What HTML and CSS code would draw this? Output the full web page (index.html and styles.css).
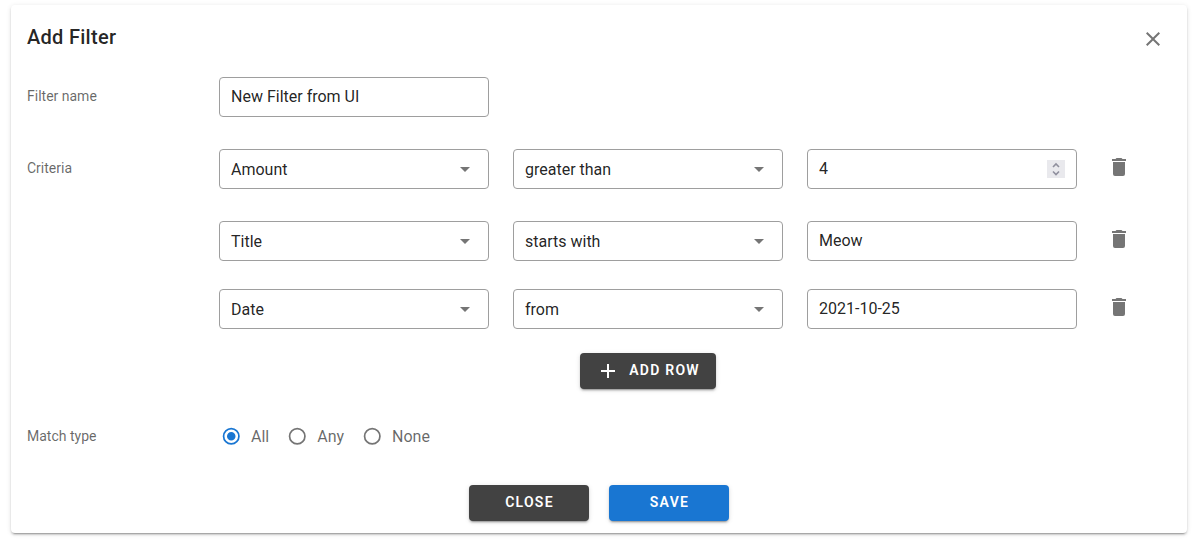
FILE: index.html
```
<!DOCTYPE html>
<html lang="en">
<head>
<meta charset="utf-8">
<title>Add Filter</title>
<link rel="stylesheet" href="styles.css">
</head>
<body>
<svg class="sprite" aria-hidden="true">
  <symbol id="delete" viewBox="0 0 24 24"><path d="M19,4H15.5L14.5,3H9.5L8.5,4H5V6H19M6,19A2,2 0 0,0 8,21H16A2,2 0 0,0 18,19V7H6V19Z"/></symbol>
  <symbol id="close" viewBox="0 0 24 24"><path d="M19,6.41L17.59,5L12,10.59L6.41,5L5,6.41L10.59,12L5,17.59L6.41,19L12,13.41L17.59,19L19,17.59L13.41,12L19,6.41Z"/></symbol>
  <symbol id="plus" viewBox="0 0 24 24"><path d="M19,13H13V19H11V13H5V11H11V5H13V11H19V13Z"/></symbol>
  <symbol id="caret" viewBox="0 0 24 24"><path d="M7,10L12,15L17,10H7Z"/></symbol>
  <symbol id="radio" viewBox="0 0 24 24"><path d="M12,20A8,8 0 0,1 4,12A8,8 0 0,1 12,4A8,8 0 0,1 20,12A8,8 0 0,1 12,20M12,2A10,10 0 0,0 2,12A10,10 0 0,0 12,22A10,10 0 0,0 22,12A10,10 0 0,0 12,2Z"/></symbol>
  <symbol id="radio-on" viewBox="0 0 24 24"><path d="M12,20A8,8 0 0,1 4,12A8,8 0 0,1 12,4A8,8 0 0,1 20,12A8,8 0 0,1 12,20M12,2A10,10 0 0,0 2,12A10,10 0 0,0 12,22A10,10 0 0,0 22,12A10,10 0 0,0 12,2M12,7A5,5 0 0,0 7,12A5,5 0 0,0 12,17A5,5 0 0,0 17,12A5,5 0 0,0 12,7Z"/></symbol>
</svg>
<main class="card">
  <header class="head">
    <h1 class="title">Add Filter</h1>
    <svg class="icon"><use href="#close"/></svg>
  </header>
  <section class="row name-row">
    <div class="label">Filter name</div>
    <div class="field input">New Filter from UI</div>
  </section>
  <section class="row">
    <div class="label">Criteria</div>
    <div class="criteria">
      <div class="criterion">
        <div class="field">Amount<svg class="caret"><use href="#caret"/></svg></div>
        <div class="field">greater than<svg class="caret"><use href="#caret"/></svg></div>
        <div class="field input">4
          <svg class="spinner" viewBox="0 0 18 18"><path d="M6 7L9 4L12 7M6 11.5L9 14.5L12 11.5"/></svg>
        </div>
        <svg class="icon trash"><use href="#delete"/></svg>
      </div>
      <div class="criterion">
        <div class="field">Title<svg class="caret"><use href="#caret"/></svg></div>
        <div class="field">starts with<svg class="caret"><use href="#caret"/></svg></div>
        <div class="field input">Meow</div>
        <svg class="icon trash"><use href="#delete"/></svg>
      </div>
      <div class="criterion last">
        <div class="field">Date<svg class="caret"><use href="#caret"/></svg></div>
        <div class="field">from<svg class="caret"><use href="#caret"/></svg></div>
        <div class="field input">2021-10-25</div>
        <svg class="icon trash"><use href="#delete"/></svg>
      </div>
      <div class="add"><div class="btn add-btn"><svg class="plus"><use href="#plus"/></svg><span>ADD ROW</span></div></div>
    </div>
  </section>
  <section class="row match">
    <div class="label">Match type</div>
    <div class="radios">
      <div class="radio on"><svg class="dot"><use href="#radio-on"/></svg><span>All</span></div>
      <div class="radio"><svg class="dot"><use href="#radio"/></svg><span>Any</span></div>
      <div class="radio"><svg class="dot"><use href="#radio"/></svg><span>None</span></div>
    </div>
  </section>
  <footer class="actions">
    <div class="btn"><span>CLOSE</span></div>
    <div class="btn primary"><span>SAVE</span></div>
  </footer>
</main>
</body>
</html>
```
FILE: styles.css
```
* { box-sizing: border-box; }
body {
  margin: 0;
  padding: 5px 12px 10px 11px;
  background: #fff;
  color: rgba(0, 0, 0, .87);
  font: 16px/24px Roboto, sans-serif;
}
.sprite { display: none; }
.card {
  height: 528px;
  padding: 0 16px;
  border-radius: 4px;
  background: #fff;
  box-shadow: 0 3px 1px -2px rgba(0,0,0,.2), 0 2px 2px 0 rgba(0,0,0,.14), 0 1px 5px 0 rgba(0,0,0,.12);
}
.head {
  display: flex;
  justify-content: space-between;
  height: 72px;
  padding: 16px 6px 0 0;
}
.title {
  margin: 0;
  font-size: 20px;
  line-height: 32px;
  font-weight: 500;
  letter-spacing: .28px;
}
.icon { width: 24px; height: 24px; fill: #757575; }
.head .icon { margin-top: 6px; }
.row { display: flex; }
.name-row { height: 72px; }
.label {
  width: 192px;
  padding-top: 9px;
  font-size: 14px;
  line-height: 20px;
  color: rgba(0, 0, 0, .6);
}
.field {
  display: flex;
  align-items: center;
  justify-content: space-between;
  width: 270px;
  height: 40px;
  padding: 2px 11px 0;
  border: 1px solid #9e9e9e;
  border-radius: 4px;
}
.input { padding-top: 0; }
.caret { width: 24px; height: 24px; margin-top: -2px; fill: #757575; }
.spinner {
  width: 18px;
  height: 18px;
  background: #e9e9ed;
  fill: none;
  stroke: #8f8f9d;
  stroke-width: 1.6;
}
.criterion { display: flex; gap: 24px; height: 72px; }
.criterion + .last { height: 40px; margin-top: -4px; }
.trash { margin: 6px 0 0 6px; }
.add { display: flex; justify-content: center; width: 858px; margin-top: 24px; }
.btn {
  display: flex;
  align-items: center;
  justify-content: center;
  width: 120px;
  height: 36px;
  border-radius: 4px;
  background: #424242;
  color: #fff;
  font-size: 14px;
  font-weight: 600;
  letter-spacing: 1.25px;
  box-shadow: 0 3px 1px -2px rgba(0,0,0,.2), 0 2px 2px 0 rgba(0,0,0,.14), 0 1px 5px 0 rgba(0,0,0,.12);
}
.btn span { padding: 0 0 2px 1px; }
.primary { background: #1976d2; }
.add-btn { width: 136px; gap: 8px; }
.plus { width: 24px; height: 24px; fill: #fff; }
.match { height: 68px; padding-top: 28px; }
.radios { display: flex; gap: 18px; padding: 7px 0 0 2px; color: rgba(0, 0, 0, .6); }
.radio { display: flex; align-items: center; gap: 9.5px; height: 24px; }
.radio span { padding-top: 2px; }
.dot { width: 20.5px; height: 20.5px; margin-top: 1px; fill: #757575; }
.on .dot { fill: #1976d2; }
.actions { display: flex; justify-content: center; gap: 20px; padding-top: 28px; }
```
